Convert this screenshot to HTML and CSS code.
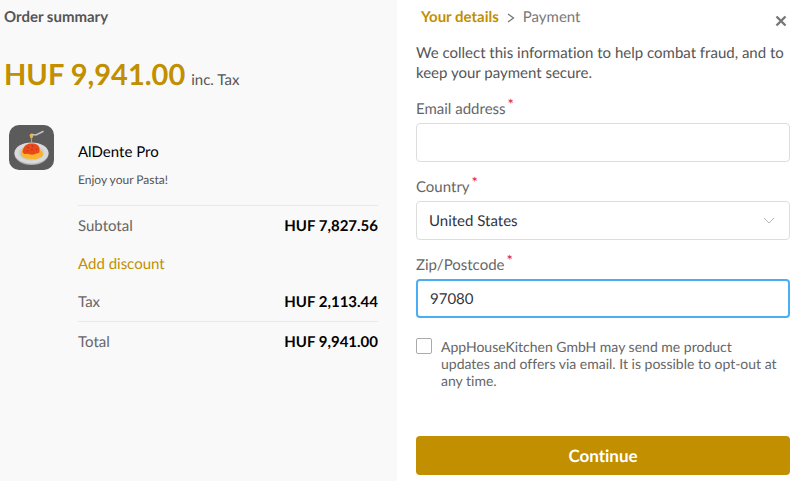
FILE: index.html
```html
<!DOCTYPE html>
<html lang="en">
<head>
<meta charset="utf-8">
<meta name="viewport" content="width=device-width, initial-scale=1">
<title>Checkout</title>
<link rel="stylesheet" href="styles.css">
</head>
<body>
<main class="checkout">
  <section class="summary">
    <h1 class="summary-title">Order summary</h1>
    <p class="price"><strong class="price-amount">HUF 9,941.00</strong><span class="price-note">inc. Tax</span></p>
    <div class="order">
      <svg class="product-icon" viewBox="0 0 45 45" aria-hidden="true">
        <rect width="45" height="45" rx="10" fill="#5b5b5b"/>
        <ellipse cx="22.5" cy="29" rx="17" ry="11" fill="#b4b4b4"/>
        <ellipse cx="22.5" cy="28" rx="17" ry="10.5" fill="#d9dadb"/>
        <ellipse cx="22.5" cy="28" rx="12.5" ry="7.5" fill="#c9cacc"/>
        <path d="M12 28C13 22 17 19.500 23 20C29 20 31 25 34 28C35 32 29 34 24 34C18 34 12 33 12 28Z" fill="#fbb42c"/>
        <path d="M14 25C15 20 19 18 23 18.500C28 18.500 31 21 30.500 25C31 29 28 28 26 29C22 31 20 28 17 29C14 29 13 27 14 25Z" fill="#e8481c"/>
        <path d="M18 22l2 1M23 20l1 2M22 25l2-1M27 24l1 1M18 26l1 0" stroke="#b93a10" stroke-width="1"/>
        <path d="M22.500 11V18" stroke="#d99a2b" stroke-width="1.200"/>
        <path d="M20.500 10q2-3 4 0l-1 3h-2z" fill="#f2b440"/>
        <path d="M23 9.500l4 .5 7-3.500" stroke="#c2c2c2" stroke-width="1.600" fill="none" stroke-linecap="round"/>
      </svg>
      <div class="order-body">
        <h2 class="product-name">AlDente Pro</h2>
        <p class="product-note">Enjoy your Pasta!</p>
        <dl class="totals">
          <div class="row row-ruled"><dt>Subtotal</dt><dd>HUF 7,827.56</dd></div>
          <div class="row"><dt><a class="discount" href="#discount">Add discount</a></dt></div>
          <div class="row"><dt>Tax</dt><dd>HUF 2,113.44</dd></div>
          <div class="row row-ruled"><dt>Total</dt><dd>HUF 9,941.00</dd></div>
        </dl>
      </div>
    </div>
  </section>
  <section class="details">
    <header class="steps">
      <nav class="steps-nav" aria-label="Checkout steps">
        <span class="step-current">Your details</span>
        <svg class="step-arrow" viewBox="0 0 8 10" aria-hidden="true"><path d="M1 2L6.500 6L1 10"/></svg>
        <span class="step-next">Payment</span>
      </nav>
      <button class="close" type="button" aria-label="Close">
        <svg class="close-icon" viewBox="0 0 12 12" aria-hidden="true"><path d="M1.500 1.500L10.500 10.500M10.500 1.500L1.500 10.500"/></svg>
      </button>
    </header>
    <p class="intro">We collect this information to help combat fraud, and to keep your payment secure.</p>
    <form class="form">
      <div class="field">
        <label class="label" for="email">Email address<span class="required">*</span></label>
        <input class="control" id="email" type="email" required>
      </div>
      <div class="field">
        <label class="label" for="country">Country<span class="required">*</span></label>
        <div class="select-wrap">
          <select class="control" id="country"><option>United States</option></select>
          <svg class="chevron" viewBox="0 0 12 8" aria-hidden="true"><path d="M1 1L6 6L11 1"/></svg>
        </div>
      </div>
      <div class="field">
        <label class="label" for="zip">Zip/Postcode<span class="required">*</span></label>
        <input class="control control-active" id="zip" type="text" value="97080" required>
      </div>
      <div class="consent">
        <input class="checkbox" id="marketing" type="checkbox">
        <label class="consent-label" for="marketing">AppHouseKitchen GmbH may send me product updates and offers via email. It is possible to opt-out at any time.</label>
      </div>
      <button class="submit" type="submit">Continue</button>
    </form>
  </section>
</main>
</body>
</html>
```
FILE: styles.css
```css
* { box-sizing: border-box; }

body {
  margin: 0;
  background: #fff;
  color: #555;
  font: 15px/20px Lato, sans-serif;
  font-variant-ligatures: none;
  text-rendering: geometricPrecision;
}

h1, h2, p, dl, dd { margin: 0; }

button, input, select {
  font: inherit;
  font-variant-ligatures: none;
  text-rendering: inherit;
}

.checkout {
  display: grid;
  grid-template-columns: 397fr 403fr;
  min-height: 100vh;
}

.summary {
  padding: 7px 19px 20px 4px;
  background: #f9f9f9;
}

.summary-title { font-size: 15px; font-weight: 700; }

.price {
  display: flex;
  align-items: baseline;
  gap: 6px;
  margin-top: 28px;
  line-height: 40px;
}
.price-amount { color: #c18f00; font-size: 29px; font-weight: 700; }
.price-note { font-size: 15px; }

.order { display: flex; gap: 24px; margin-top: 25px; padding-left: 5px; }
.product-icon { flex: none; width: 45px; height: 45px; }
.order-body { flex: 1; padding-top: 17px; }

.product-name { color: #000; font-size: 15px; font-weight: 400; }
.product-note { margin-top: 8px; font-size: 12px; }

.totals { margin-top: 15px; }
.row {
  display: flex;
  align-items: center;
  justify-content: space-between;
  height: 38px;
  color: #666;
}
.row-ruled { height: 40px; border-top: 1px solid #e8e8e8; }
.row dd { color: #000; font-weight: 700; }
.discount { color: #c18f00; text-decoration: none; }

.details { padding: 7px 10px 5px 19px; }

.steps { display: flex; justify-content: space-between; }
.steps-nav { display: flex; align-items: center; gap: 8px; padding-left: 5px; }
.step-current { color: #c18f00; font-weight: 700; }
.step-next { color: #777; }
.step-arrow { width: 8px; height: 10px; fill: none; stroke: #777; stroke-width: 1.3; overflow: visible; }

.close {
  display: flex;
  align-items: flex-end;
  height: 20px;
  padding: 0 3px;
  border: 0;
  background: none;
}
.close-icon { width: 12px; height: 12px; fill: none; stroke: #777; stroke-width: 2.4; }

.intro { margin-top: 16px; }

.form { margin-top: 16px; }
.field { margin-bottom: 15px; }
.label { display: block; margin-bottom: 4px; color: #666; }
.required { margin-left: 2px; color: #e0264f; vertical-align: 4px; line-height: 0; }

.control {
  display: block;
  width: 100%;
  height: 39px;
  padding: 0 12px;
  border: 1px solid #ddd;
  border-radius: 4px;
  outline: 0;
  background: #fff;
  color: #333340;
  appearance: none;
}
.control-active { border: 2px solid #4aaef5; }

.select-wrap { display: grid; align-items: center; }
.select-wrap .control, .chevron { grid-area: 1 / 1; }
.chevron {
  justify-self: end;
  width: 12px;
  height: 8px;
  margin-right: 15px;
  fill: none;
  stroke: #b5b5c3;
  pointer-events: none;
}

.consent { display: flex; gap: 9px; margin-top: 20px; }
.checkbox {
  flex: none;
  width: 16px;
  height: 16px;
  margin: 0;
  border: 1px solid #aaa;
  border-radius: 2px;
  background: #fff;
  appearance: none;
}
.checkbox:checked { background: #c18f00; }
.consent-label { padding-right: 8px; color: #666; font-size: 14px; line-height: 17px; }

.submit {
  display: block;
  width: 100%;
  height: 39px;
  margin-top: 47px;
  border: 0;
  border-radius: 4px;
  background: #c18f00;
  color: #fff;
  font-size: 17px;
  font-weight: 700;
}
```
